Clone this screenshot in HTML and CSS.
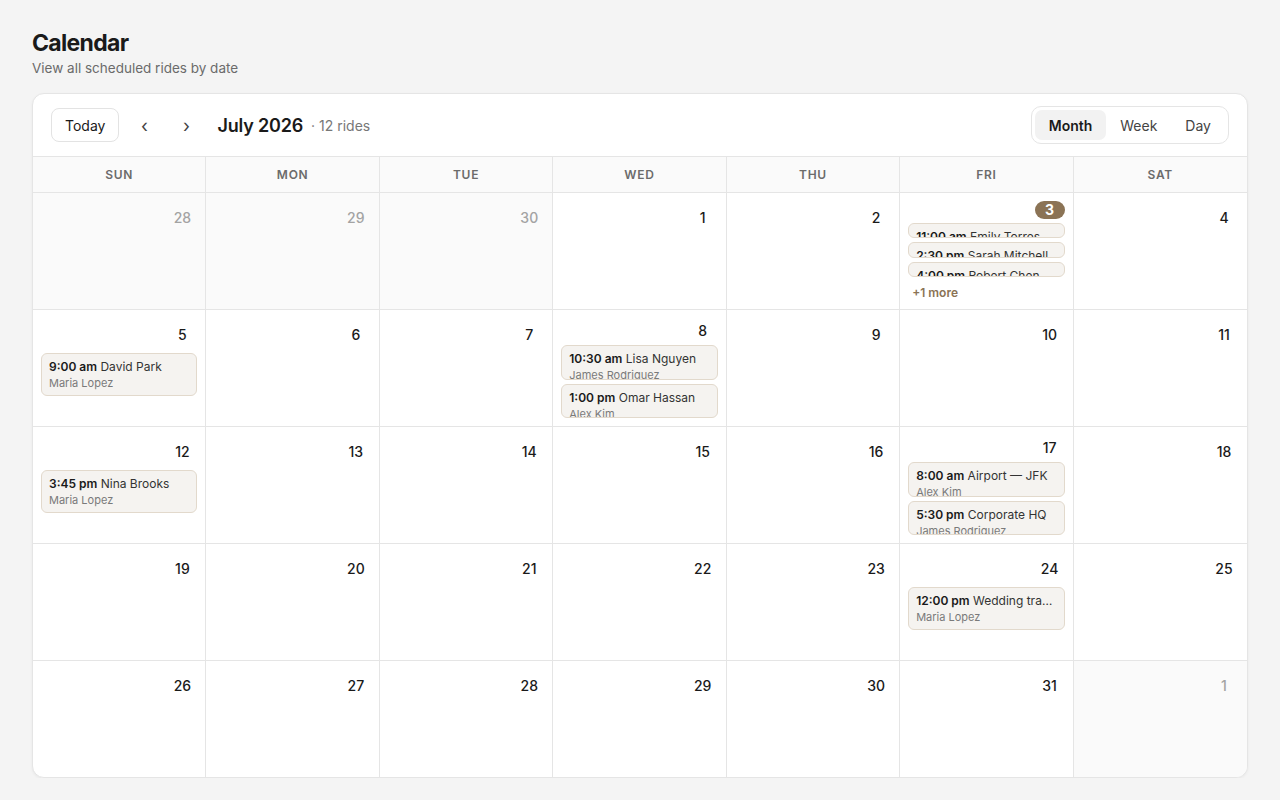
FILE: index.html
```html
<!DOCTYPE html>
<html lang="en">
<head>
<meta charset="utf-8">
<title>Calendar</title>
<link rel="stylesheet" href="styles.css">
</head>
<body>
<div class="page">
  <h1 class="title">Calendar</h1>
  <p class="subtitle">View all scheduled rides by date</p>
  <div class="card">
    <div class="toolbar">
      <button class="btn-today">Today</button>
      <button class="nav">&#8249;</button>
      <button class="nav">&#8250;</button>
      <span class="month">July 2026</span>
      <span class="count">· 12 rides</span>
      <div class="seg">
        <button class="active">Month</button>
        <button>Week</button>
        <button>Day</button>
      </div>
    </div>
    <div class="weekdays">
      <div>SUN</div><div>MON</div><div>TUE</div><div>WED</div><div>THU</div><div>FRI</div><div>SAT</div>
    </div>
    <div class="grid">
      <div class="cell out"><span class="date">28</span></div>
      <div class="cell out"><span class="date">29</span></div>
      <div class="cell out"><span class="date">30</span></div>
      <div class="cell"><span class="date">1</span></div>
      <div class="cell"><span class="date">2</span></div>
      <div class="cell">
        <span class="date today">3</span>
        <div class="event"><span class="ev-line"><b>11:00 am</b> Emily Torres</span><span class="ev-sub">Maria Lopez</span></div>
        <div class="event"><span class="ev-line"><b>2:30 pm</b> Sarah Mitchell</span><span class="ev-sub">Alex Kim</span></div>
        <div class="event"><span class="ev-line"><b>4:00 pm</b> Robert Chen</span><span class="ev-sub">James Rodriguez</span></div>
        <span class="more">+1 more</span>
      </div>
      <div class="cell"><span class="date">4</span></div>

      <div class="cell">
        <span class="date">5</span>
        <div class="event"><span class="ev-line"><b>9:00 am</b> David Park</span><span class="ev-sub">Maria Lopez</span></div>
      </div>
      <div class="cell"><span class="date">6</span></div>
      <div class="cell"><span class="date">7</span></div>
      <div class="cell">
        <span class="date">8</span>
        <div class="event"><span class="ev-line"><b>10:30 am</b> Lisa Nguyen</span><span class="ev-sub">James Rodriguez</span></div>
        <div class="event"><span class="ev-line"><b>1:00 pm</b> Omar Hassan</span><span class="ev-sub">Alex Kim</span></div>
      </div>
      <div class="cell"><span class="date">9</span></div>
      <div class="cell"><span class="date">10</span></div>
      <div class="cell"><span class="date">11</span></div>

      <div class="cell">
        <span class="date">12</span>
        <div class="event"><span class="ev-line"><b>3:45 pm</b> Nina Brooks</span><span class="ev-sub">Maria Lopez</span></div>
      </div>
      <div class="cell"><span class="date">13</span></div>
      <div class="cell"><span class="date">14</span></div>
      <div class="cell"><span class="date">15</span></div>
      <div class="cell"><span class="date">16</span></div>
      <div class="cell">
        <span class="date">17</span>
        <div class="event"><span class="ev-line"><b>8:00 am</b> Airport — JFK</span><span class="ev-sub">Alex Kim</span></div>
        <div class="event"><span class="ev-line"><b>5:30 pm</b> Corporate HQ</span><span class="ev-sub">James Rodriguez</span></div>
      </div>
      <div class="cell"><span class="date">18</span></div>

      <div class="cell"><span class="date">19</span></div>
      <div class="cell"><span class="date">20</span></div>
      <div class="cell"><span class="date">21</span></div>
      <div class="cell"><span class="date">22</span></div>
      <div class="cell"><span class="date">23</span></div>
      <div class="cell">
        <span class="date">24</span>
        <div class="event"><span class="ev-line"><b>12:00 pm</b> Wedding transfer</span><span class="ev-sub">Maria Lopez</span></div>
      </div>
      <div class="cell"><span class="date">25</span></div>

      <div class="cell"><span class="date">26</span></div>
      <div class="cell"><span class="date">27</span></div>
      <div class="cell"><span class="date">28</span></div>
      <div class="cell"><span class="date">29</span></div>
      <div class="cell"><span class="date">30</span></div>
      <div class="cell"><span class="date">31</span></div>
      <div class="cell out"><span class="date">1</span></div>
    </div>
  </div>
</div>
</body>
</html>
```

FILE: styles.css
```css
* { box-sizing: border-box; }

body {
  margin: 0;
  background: #f4f4f4;
  font-family: Inter, "Noto Sans", "Liberation Sans", sans-serif;
  color: #1a1a1a;
}

.page {
  padding: 29px 32px 0;
}

.title {
  margin: 0 0 1px;
  font-size: 23px;
  line-height: 28px;
  font-weight: 700;
  letter-spacing: -0.03em;
}

.subtitle {
  margin: 0;
  font-size: 13.5px;
  line-height: 20px;
  color: #6b6b6b;
}

.card {
  margin-top: 15px;
  background: #fff;
  border: 1px solid #e5e5e5;
  border-radius: 12px;
  box-shadow: 0 1px 3px rgba(0, 0, 0, 0.05);
  overflow: hidden;
}

.toolbar {
  display: flex;
  align-items: center;
  height: 63px;
  padding: 0 18px;
  border-bottom: 1px solid #e5e5e5;
}

.btn-today {
  height: 34px;
  padding: 0 13px;
  border: 1px solid #e3e3e3;
  border-radius: 8px;
  background: #fff;
  font-family: inherit;
  font-size: 14px;
  font-weight: 400;
  color: #1a1a1a;
}

.nav {
  width: 34px;
  height: 34px;
  margin-left: 8px;
  padding: 0;
  border: 0;
  background: none;
  font-family: inherit;
  font-size: 18px;
  color: #444;
}

.month {
  margin-left: 14px;
  font-size: 18px;
  font-weight: 600;
  letter-spacing: -0.01em;
}

.count {
  margin-left: 8px;
  font-size: 14px;
  color: #777;
}

.seg {
  margin-left: auto;
  display: flex;
  gap: 0;
  padding: 3px;
  border: 1px solid #e5e5e5;
  border-radius: 10px;
}

.seg button {
  height: 30px;
  padding: 0 14px;
  border: 0;
  border-radius: 7px;
  background: none;
  font-family: inherit;
  font-size: 14px;
  font-weight: 400;
  color: #444;
}

.seg .active {
  background: #f2f2f2;
  font-weight: 600;
  color: #1a1a1a;
}

.weekdays {
  display: grid;
  grid-template-columns: repeat(7, 1fr);
  background: #fafafa;
  border-bottom: 1px solid #e5e5e5;
}

.weekdays div {
  height: 35px;
  display: flex;
  align-items: center;
  justify-content: center;
  font-size: 12px;
  font-weight: 600;
  letter-spacing: 0.06em;
  color: #6b6b6b;
  border-right: 1px solid #e5e5e5;
}

.weekdays div:last-child { border-right: 0; }

.grid {
  display: grid;
  grid-template-columns: repeat(7, 1fr);
  grid-template-rows: repeat(4, 117px) 116px;
}

.cell {
  display: flex;
  flex-direction: column;
  gap: 4px;
  min-width: 0;
  padding: 8px;
  overflow: hidden;
  border-right: 1px solid #e5e5e5;
  border-bottom: 1px solid #e5e5e5;
}

.cell:nth-child(7n) { border-right: 0; }
.cell:nth-last-child(-n+7) { border-bottom: 0; }

.cell.out { background: #fafafa; }

.date {
  align-self: flex-end;
  width: 30px;
  height: 31px;
  padding-top: 2px;
  display: flex;
  align-items: center;
  justify-content: center;
  font-size: 14px;
  line-height: 18px;
  font-weight: 500;
  color: #1a1a1a;
}

.cell.out .date { color: #a3a3a3; }

.date.today {
  padding-top: 0;
  background: #8b7355;
  color: #fff;
  border-radius: 999px;
  font-weight: 700;
}

.event {
  flex: 0 1 auto;
  overflow: hidden;
  padding: 5px 7px;
  border: 1px solid #e2d9cc;
  border-radius: 6px;
  background: #f5f3f0;
}

.ev-line {
  display: block;
  font-size: 12px;
  line-height: 16px;
  color: #333;
  white-space: nowrap;
  overflow: hidden;
  text-overflow: ellipsis;
}

.ev-line b {
  font-weight: 600;
  color: #1a1a1a;
}

.ev-sub {
  display: block;
  margin-top: 1px;
  font-size: 11px;
  line-height: 14px;
  color: #7a7a7a;
  white-space: nowrap;
  overflow: hidden;
  text-overflow: ellipsis;
}

.more {
  flex-shrink: 0;
  padding: 4px 4px 0;
  font-size: 12px;
  line-height: 16px;
  font-weight: 600;
  color: #8b7355;
}
```
